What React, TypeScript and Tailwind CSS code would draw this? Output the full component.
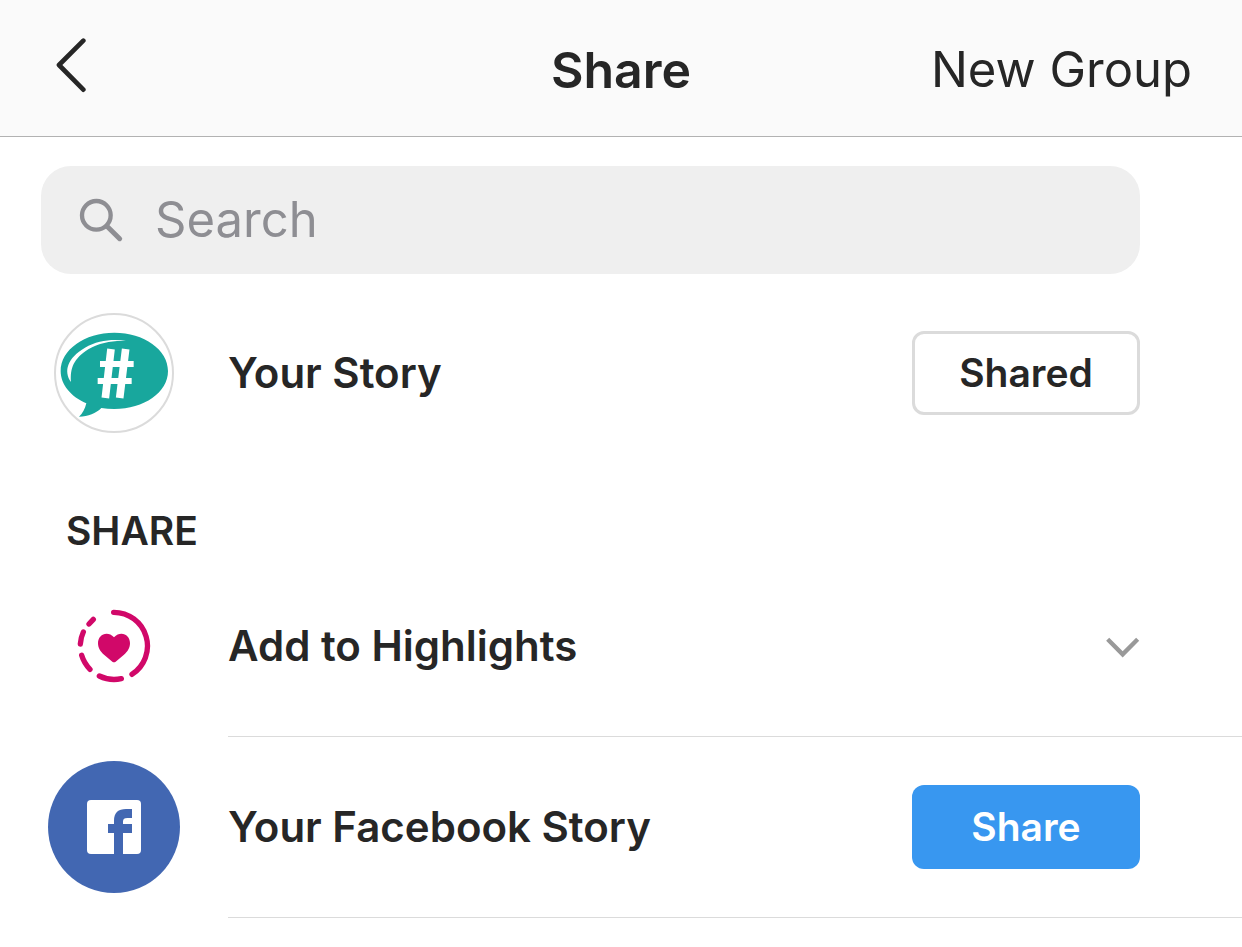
import { useState } from 'react';
import type { ReactNode } from 'react';
import clsx from 'clsx';

function BackIcon() {
  return (
    <svg
      viewBox="60 54 120 192"
      className="h-16 w-10"
      fill="none"
      stroke="currentColor"
      strokeWidth="14"
      strokeLinecap="round"
      strokeLinejoin="round"
      aria-hidden="true"
    >
      <path d="m160 62-73 73 73 74" />
    </svg>
  );
}

function SearchIcon() {
  return (
    <svg
      viewBox="141 123 144 144"
      className="size-12 shrink-0 text-[#8e8e93]"
      fill="none"
      stroke="currentColor"
      strokeWidth="13"
      strokeLinecap="round"
      aria-hidden="true"
    >
      <circle cx="199" cy="181" r="43" />
      <path d="m231 214 38 37" strokeWidth="15" />
    </svg>
  );
}

function ChevronIcon() {
  return (
    <svg
      viewBox="72 24 108 108"
      className="size-9"
      fill="none"
      stroke="currentColor"
      strokeWidth="13"
      aria-hidden="true"
    >
      <path d="m83 58 45 45 45-45" />
    </svg>
  );
}

function StoryAvatar() {
  return (
    <svg viewBox="42 39 360 360" className="size-30" aria-hidden="true">
      <circle cx="222" cy="219" r="177" fill="#fff" stroke="#dbdbdb" strokeWidth="6" />
      <path
        fill="#18a79d"
        d="M223 98c89 0 161 51 161 115s-72 114-161 114c-14 0-27-1-39-3-16 16-39 26-67 26 11-10 18-23 22-40-46-20-77-56-77-97 0-64 72-115 161-115Z"
      />
      <path
        fill="#fff"
        d="M258 123c-35-7-84-3-123 20-53 31-65 70-42 103-3-42 8-70 52-98 34-21 74-27 113-25Z"
      />
      <g stroke="#fff" strokeWidth="18">
        <path d="m213 147-17 147M257 147l-18 147" strokeWidth="23" />
        <path d="M180 192h101M173 243h102" />
      </g>
    </svg>
  );
}

function HighlightsIcon() {
  return (
    <svg
      viewBox="48 39 228 228"
      className="size-19"
      fill="none"
      stroke="#d10869"
      strokeWidth="16"
      strokeLinecap="round"
      aria-hidden="true"
    >
      <path d="M161 52A101 101 0 0 1 216 238M184 251A101 101 0 0 1 118 243M90 223A101 101 0 0 1 65 181M61 147A101 101 0 0 1 70 111M87 87 100 73" />
      <path
        fill="#d10869"
        stroke="none"
        d="M162 127c7-8 15-11 22-11 15 0 26 12 26 28 0 15-7 25-19 36l-24 20q-5 4-10 0l-24-20c-12-11-19-21-19-36 0-16 11-28 26-28 7 0 15 3 22 11Z"
      />
    </svg>
  );
}

function FacebookIcon() {
  return (
    <svg viewBox="24 33 396 396" className="size-33" aria-hidden="true">
      <circle cx="222" cy="231" r="198" fill="#4267b2" />
      <rect x="141" y="150" width="162" height="162" rx="12" fill="#fff" />
      <path
        fill="#4267b2"
        d="M222 313v-64h-18v-27h18v-9c0-25 13-36 36-36h18v27h-14c-9 0-13 3-13 11v7h27v27h-27v64Z"
      />
    </svg>
  );
}

function ShareButton({
  label,
  shared,
  onClick,
}: {
  label: string;
  shared: boolean;
  onClick: () => void;
}) {
  return (
    <button
      type="button"
      aria-label={`${shared ? 'Shared' : 'Share'}: ${label}`}
      onClick={onClick}
      className={clsx(
        'h-21 w-57 shrink-0 rounded-xl text-[39px] font-semibold',
        shared
          ? 'border-3 border-[#dbdbdb] bg-white text-[#262626]'
          : 'bg-[#3897f0] text-white',
      )}
    >
      {shared ? 'Shared' : 'Share'}
    </button>
  );
}

function Row({
  icon,
  title,
  divider,
  children,
}: {
  icon: ReactNode;
  title: string;
  divider?: boolean;
  children: ReactNode;
}) {
  return (
    <li className="flex">
      <div
        className={clsx(
          'flex w-57 shrink-0 items-center justify-center',
          divider && 'pb-px',
        )}
      >
        {icon}
      </div>
      <div
        className={clsx(
          'flex min-w-0 flex-1 items-center justify-between pr-[102px]',
          divider ? 'h-[181px] border-b border-[#dbdbdb]' : 'h-[198px]',
        )}
      >
        <span className="text-[42px] leading-[64px] font-semibold">
          {title}
        </span>
        {children}
      </div>
    </li>
  );
}

export default function App() {
  const [query, setQuery] = useState('');
  const [storyShared, setStoryShared] = useState(true);
  const [facebookShared, setFacebookShared] = useState(false);

  return (
    <div className="min-h-screen bg-white font-[Inter,sans-serif] text-[#262626]">
      <header className="grid grid-cols-3 items-center border-b border-[#b2b2b2] bg-[#fafafa] px-[50px] pt-8 pb-7">
        <button type="button" aria-label="Back" className="justify-self-start">
          <BackIcon />
        </button>
        <h1 className="text-center text-[50px] leading-[76px] font-semibold">
          Share
        </h1>
        <button
          type="button"
          className="justify-self-end text-[49px] leading-[76px] whitespace-nowrap"
        >
          New Group
        </button>
      </header>

      <main className="pt-[29px]">
        <label className="mr-[102px] ml-[41px] flex h-27 items-center gap-[30px] rounded-[30px] bg-[#efefef] px-9">
          <SearchIcon />
          <input
            type="text"
            aria-label="Search"
            placeholder="Search"
            value={query}
            onChange={(e) => setQuery(e.target.value)}
            className="min-w-0 flex-1 bg-transparent text-[49px] outline-none placeholder:text-[#8e8e93]"
          />
        </label>

        <ul>
          <Row icon={<StoryAvatar />} title="Your Story">
            <ShareButton
              label="Your Story"
              shared={storyShared}
              onClick={() => setStoryShared(!storyShared)}
            />
          </Row>
        </ul>

        <h2 className="pt-[34px] pl-[66px] text-[39px] leading-[50px] font-semibold">
          SHARE
        </h2>
        <ul>
          <Row icon={<HighlightsIcon />} title="Add to Highlights" divider>
            <button
              type="button"
              aria-label="Show highlights"
              className="text-[#999]"
            >
              <ChevronIcon />
            </button>
          </Row>
          <Row icon={<FacebookIcon />} title="Your Facebook Story" divider>
            <ShareButton
              label="Your Facebook Story"
              shared={facebookShared}
              onClick={() => setFacebookShared(!facebookShared)}
            />
          </Row>
        </ul>
      </main>
    </div>
  );
}
